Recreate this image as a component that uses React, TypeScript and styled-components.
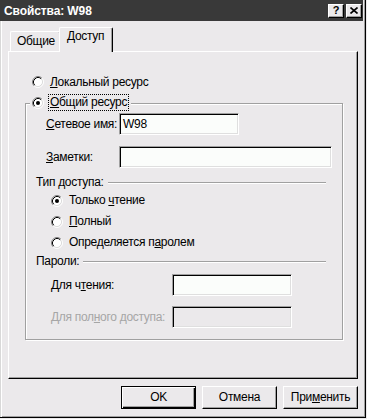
import React from "react";
import styled, { createGlobalStyle } from "styled-components";

const BG = "#ebe9eb";
const FONT = `"Liberation Sans", Arial, sans-serif`;

const Global = createGlobalStyle`
  html, body { margin: 0; padding: 0; background: ${BG}; }
  body { font-family: ${FONT}; font-size: 12px; letter-spacing: -0.3px; color: #000; white-space: nowrap; }
  * { box-sizing: border-box; }
`;

const Window = styled.div`
  width: 366px;
  height: 418px;
  display: flex;
  flex-direction: column;
  background: ${BG};
  border-right: 1px solid #000;
  border-bottom: 1px solid #000;
  box-shadow: inset -1px -1px 0 #a0a0a0;
`;

const TitleBar = styled.div`
  flex: none;
  height: 21px;
  margin-right: 2px;
  background: #393939;
  display: flex;
  align-items: center;
  justify-content: space-between;
  padding: 0 1px 0 4px;
`;

const TitleText = styled.span`
  font-weight: bold;
  font-size: 12px;
  color: #fff;
  letter-spacing: -0.1px;
`;

const TitleButtons = styled.div`
  display: flex;
  gap: 2px;
`;

const TitleButton = styled.div`
  width: 16px;
  height: 14px;
  background: ${BG};
  border-top: 1px solid #fff;
  border-left: 1px solid #fff;
  border-right: 1px solid #000;
  border-bottom: 1px solid #000;
  box-shadow: inset -1px -1px 0 #a0a0a0;
  display: flex;
  align-items: center;
  justify-content: center;
  font-weight: bold;
  font-size: 11px;
  line-height: 1;
  letter-spacing: 0;
`;

const Client = styled.div`
  flex: 1;
  padding: 6px 7px 0 8px;
  box-shadow: inset 1px 0 0 #d8d8d8, inset 2px 0 0 #fff;
`;

const TabStrip = styled.div`
  height: 24px;
  display: flex;
  align-items: flex-end;
  padding-left: 2px;
`;

const Tab = styled.div<{ $active?: boolean }>`
  position: relative;
  height: ${(p) => (p.$active ? 25 : 20)}px;
  margin: ${(p) => (p.$active ? "0 -2px -1px -2px" : "0")};
  z-index: ${(p) => (p.$active ? 1 : 0)};
  padding: ${(p) => (p.$active ? "1px 8px 0 7px" : "2px 5px 0 6px")};
  background: ${BG};
  border-top: 1px solid #fff;
  border-left: 1px solid #fff;
  border-right: 1px solid #000;
  border-radius: 2px 2px 0 0;
  box-shadow: inset -1px 0 0 #a0a0a0;
  line-height: 15px;
`;

const Panel = styled.div`
  height: 328px;
  border-top: 1px solid #fff;
  border-left: 1px solid #fff;
  border-right: 1px solid #000;
  border-bottom: 1px solid #000;
  box-shadow: inset -1px -1px 0 #a0a0a0;
  padding: 22px 14px 0 16px;
`;

const RadioRow = styled.label<{ $indent?: number; $h?: number }>`
  display: flex;
  align-items: center;
  gap: 6px;
  height: ${(p) => p.$h ?? 16}px;
  padding-left: ${(p) => p.$indent ?? 0}px;
  line-height: 15px;
`;

const U = styled.span`
  text-decoration: underline;
  text-underline-offset: 1px;
`;

const Group = styled.div`
  position: relative;
  margin-top: 13px;
  border: 1px solid #a0a0a0;
  box-shadow: 1px 1px 0 #fff, inset 1px 1px 0 #fff;
  padding: 9px 8px 11px 1px;
`;

const Legend = styled.div`
  position: absolute;
  top: -10px;
  left: 4px;
  height: 17px;
  padding: 0 2px;
  background: ${BG};
  display: flex;
  align-items: center;
  gap: 4px;
`;

const FocusLabel = styled.span`
  border: 1px dotted #000;
  padding: 0 1px;
  line-height: 15px;
`;

const FieldRow = styled.div<{ $gap?: number; $indent: number; $labelW: number }>`
  display: flex;
  align-items: center;
  height: 22px;
  margin-top: ${(p) => p.$gap ?? 0}px;
  padding-left: ${(p) => p.$indent}px;

  & > span:first-child {
    width: ${(p) => p.$labelW}px;
    flex: none;
  }
`;

const FieldLabel = styled.span<{ $disabled?: boolean }>`
  color: ${(p) => (p.$disabled ? "#a6a6a6" : "#000")};
`;

const Input = styled.div<{ $w: number; $disabled?: boolean }>`
  width: ${(p) => p.$w}px;
  height: 22px;
  border-top: 1px solid #a0a0a0;
  border-left: 1px solid #a0a0a0;
  border-right: 1px solid #fff;
  border-bottom: 1px solid #fff;
  box-shadow: inset 1px 1px 0 #000, inset -1px -1px 0 #dfdfdf;
  background: ${(p) => (p.$disabled ? BG : "#fbfdfb")};
  padding: 2px 3px 0 3px;
  line-height: 16px;
`;

const SectionHeader = styled.div<{ $gap: number }>`
  display: flex;
  align-items: center;
  height: 14px;
  margin-top: ${(p) => p.$gap}px;
  padding-left: 9px;
  line-height: 14px;
`;

const EtchedLine = styled.div`
  flex: 1;
  height: 2px;
  margin: 1px 8px 0 4px;
  border-top: 1px solid #a0a0a0;
  border-bottom: 1px solid #fff;
`;

const RadioList = styled.div`
  margin-top: 1px;
`;

const ButtonRow = styled.div`
  display: flex;
  justify-content: flex-end;
  gap: 6px;
  margin-top: 7px;
`;

const Button = styled.div<{ $default?: boolean }>`
  width: 75px;
  height: 23px;
  display: flex;
  align-items: center;
  justify-content: center;
  background: ${BG};
  border: 1px solid;
  border-color: ${(p) => (p.$default ? "#000" : "#fff #000 #000 #fff")};
  box-shadow: ${(p) =>
    p.$default
      ? "inset 1px 1px 0 #fff, inset -1px -1px 0 #000, inset -2px -2px 0 #a0a0a0"
      : "inset -1px -1px 0 #a0a0a0"};
  line-height: 15px;
`;

function Radio({ checked }: { checked?: boolean }) {
  return (
    <svg width="12" height="12" viewBox="0 0 12 12" style={{ flex: "none" }}>
      <circle cx="6" cy="6" r="4.5" fill="#fff" />
      <path d="M2.11 9.89A5.5 5.5 0 0 1 9.89 2.11" stroke="#808080" fill="none" />
      <path d="M9.89 2.11A5.5 5.5 0 0 1 2.11 9.89" stroke="#fff" fill="none" />
      <path d="M2.82 9.18A4.5 4.5 0 0 1 9.18 2.82" stroke="#000" fill="none" />
      <path d="M9.18 2.82A4.5 4.5 0 0 1 2.82 9.18" stroke="#dcdcdc" fill="none" />
      {checked && <circle cx="6" cy="6" r="2" fill="#000" />}
    </svg>
  );
}

function CloseIcon() {
  return (
    <svg width="8" height="7" viewBox="0 0 8 7">
      <path d="M0.5 0.5L7.5 6.5M7.5 0.5L0.5 6.5" stroke="#000" strokeWidth="1.6" />
    </svg>
  );
}

export default function App() {
  return (
    <>
      <Global />
      <Window>
        <TitleBar>
          <TitleText>Свойства: W98</TitleText>
          <TitleButtons>
            <TitleButton>?</TitleButton>
            <TitleButton>
              <CloseIcon />
            </TitleButton>
          </TitleButtons>
        </TitleBar>
        <Client>
          <TabStrip>
            <Tab>Общие</Tab>
            <Tab $active>Доступ</Tab>
          </TabStrip>
          <Panel>
            <RadioRow $indent={7}>
              <Radio />
              <span>
                <U>Л</U>окальный ресурс
              </span>
            </RadioRow>
            <Group>
              <Legend>
                <Radio checked />
                <FocusLabel>
                  <U>О</U>бщий ресурс
                </FocusLabel>
              </Legend>
              <FieldRow $indent={19} $labelW={73}>
                <span>
                  <U>С</U>етевое имя:
                </span>
                <Input $w={120}>W98</Input>
              </FieldRow>
              <FieldRow $indent={19} $labelW={73} $gap={11}>
                <span>
                  <U>З</U>аметки:
                </span>
                <Input $w={213} />
              </FieldRow>
              <SectionHeader $gap={7}>
                Тип доступа:
                <EtchedLine />
              </SectionHeader>
              <RadioList>
                <RadioRow $indent={24} $h={21}>
                  <Radio checked />
                  <span>
                    Только <U>ч</U>тение
                  </span>
                </RadioRow>
                <RadioRow $indent={24} $h={21}>
                  <Radio />
                  <span>
                    <U>П</U>олный
                  </span>
                </RadioRow>
                <RadioRow $indent={24} $h={21}>
                  <Radio />
                  <span>
                    Определяется п<U>а</U>ролем
                  </span>
                </RadioRow>
              </RadioList>
              <SectionHeader $gap={1}>
                Пароли:
                <EtchedLine />
              </SectionHeader>
              <FieldRow $indent={24} $labelW={121} $gap={6}>
                <FieldLabel>
                  Для ч<U>т</U>ения:
                </FieldLabel>
                <Input $w={120} />
              </FieldRow>
              <FieldRow $indent={24} $labelW={121} $gap={10}>
                <FieldLabel $disabled>
                  Для пол<U>н</U>ого доступа:
                </FieldLabel>
                <Input $w={120} $disabled />
              </FieldRow>
            </Group>
          </Panel>
          <ButtonRow>
            <Button $default>OK</Button>
            <Button>Отмена</Button>
            <Button>
              При<U>м</U>енить
            </Button>
          </ButtonRow>
        </Client>
      </Window>
    </>
  );
}
